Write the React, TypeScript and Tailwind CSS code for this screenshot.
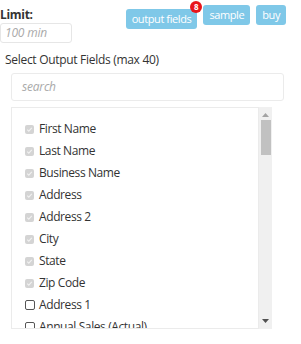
import React from 'react'

const fields = [
  { name: 'First Name', checked: true },
  { name: 'Last Name', checked: true },
  { name: 'Business Name', checked: true },
  { name: 'Address', checked: true },
  { name: 'Address 2', checked: true },
  { name: 'City', checked: true },
  { name: 'State', checked: true },
  { name: 'Zip Code', checked: true },
  { name: 'Address 1', checked: false },
  { name: 'Annual Sales (Actual)', checked: false },
]

export default function App() {
  return (
    <div className="w-[301px] h-[344px] bg-white text-[#333] font-['Open_Sans',sans-serif] overflow-hidden">
      {/* top row */}
      <div className="flex items-start justify-between pr-[15px]">
        <div className="pt-[7px]">
          <div className="text-[12px] font-bold leading-[16px] tracking-[-0.3px]">Limit:</div>
          <div className="w-[72px] h-[20px] border border-[#e6e6e6] rounded-[3px] px-[4px] text-[12px] leading-[18px] italic text-[#aaa] tracking-[-0.2px]">
            100 min
          </div>
        </div>
        <div className="flex gap-[6px] pt-[5px]">
          <div className="relative">
            <button className="h-[20px] px-[6px] rounded-[3px] bg-[#7fc8e8] text-white text-[11px] leading-[20px] tracking-[-0.4px]">
              output fields
            </button>
            <span className="absolute -top-[4px] -right-[5px] w-[12px] h-[12px] rounded-full bg-[#e8151b] text-white text-[8px] leading-[12px] text-center font-bold">
              8
            </span>
          </div>
          <button className="h-[20px] px-[6px] rounded-[3px] bg-[#7fc8e8] text-white text-[11px] leading-[20px] tracking-[-0.4px]">
            sample
          </button>
          <button className="h-[20px] px-[6px] rounded-[3px] bg-[#7fc8e8] text-white text-[11px] leading-[20px] tracking-[-0.4px]">
            buy
          </button>
        </div>
      </div>

      <div className="pl-[5px] mt-[9px] text-[12px] leading-[16px] tracking-[-0.3px]">Select Output Fields (max 40)</div>

      <div className="ml-[11px] mt-[5px] w-[273px] h-[28px] border border-[#ebebeb] rounded-[3px] px-[10px] text-[12px] leading-[26px] italic text-[#aaa] tracking-[-0.2px]">
        search
      </div>

      <div className="ml-[11px] mt-[6px] flex">
        <div className="w-[248px] h-[222px] border border-[#ebebeb] overflow-hidden pt-[10px] pl-[13px]">
          {fields.map(f => (
            <div key={f.name} className="flex items-center h-[22px] text-[12px] tracking-[-0.4px] whitespace-nowrap">
              {f.checked ? (
                <span className="w-[9px] h-[9px] rounded-[2px] bg-[#d4d4d4] flex items-center justify-center mr-[5px] shrink-0">
                  <svg width="7" height="7" viewBox="0 0 7 7">
                    <path d="M1.2 3.7 L2.8 5.2 L5.8 1.8" fill="none" stroke="#f2f2f2" strokeWidth="1.1" />
                  </svg>
                </span>
              ) : (
                <span className="w-[10px] h-[10px] rounded-[2px] border border-[#555] bg-white mr-[4px] shrink-0" />
              )}
              <span>{f.name}</span>
            </div>
          ))}
        </div>
        <div className="w-[13px] h-[222px] bg-[#f0f0f0] flex flex-col items-center">
          <svg width="7" height="4" viewBox="0 0 7 4" className="mt-[6px]">
            <path d="M0 4 L3.5 0 L7 4 Z" fill="#a3a3a3" />
          </svg>
          <div className="w-[10px] h-[35px] bg-[#c1c1c1] mt-[3px]" />
          <div className="flex-1" />
          <svg width="7" height="4" viewBox="0 0 7 4" className="mb-[6px]">
            <path d="M0 0 L7 0 L3.5 4 Z" fill="#505050" />
          </svg>
        </div>
      </div>
    </div>
  )
}
